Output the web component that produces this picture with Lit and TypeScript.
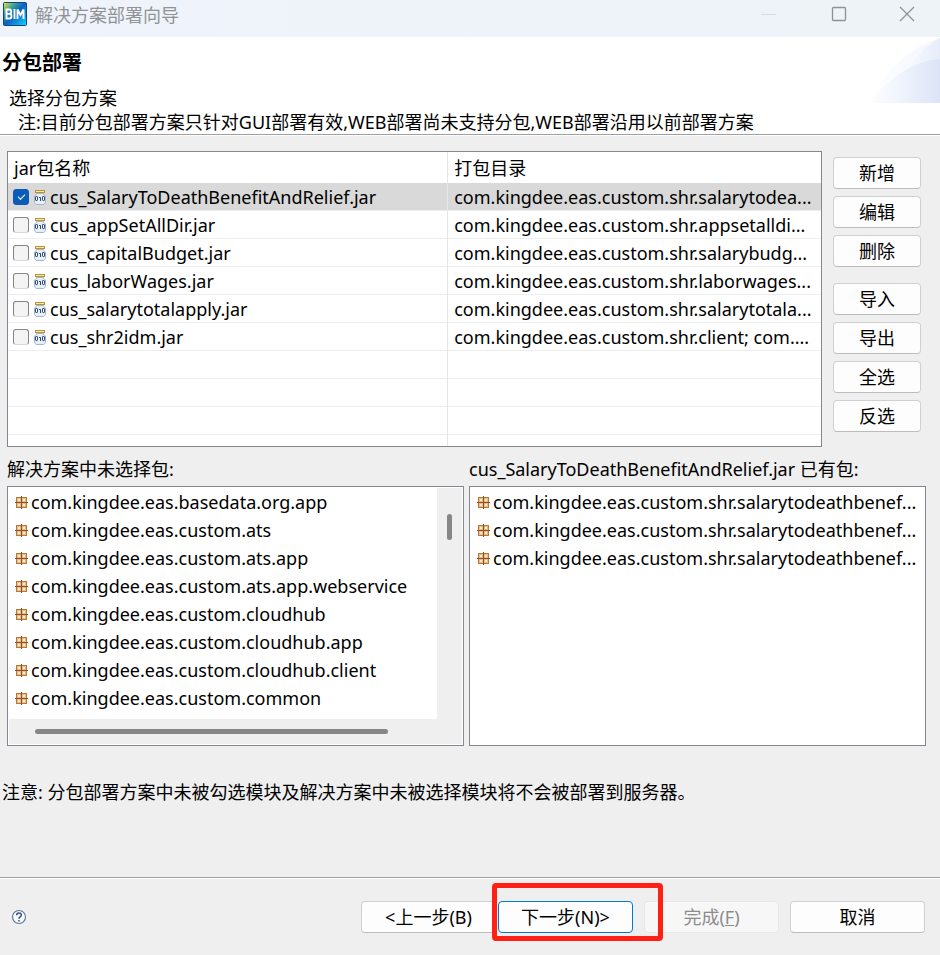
import { LitElement, html, css } from "lit";
import { customElement, state } from "lit/decorators.js";
import { classMap } from "lit/directives/class-map.js";

interface JarEntry {
  name: string;
  dirs: string;
  checked: boolean;
}

const packageIcon = html`<svg class="pkg" viewBox="0 0 13 13" aria-hidden="true">
  <rect x="1.5" y="1.5" width="10" height="10" fill="#e9bd80" stroke="#b9783a" />
  <rect x="3" y="3" width="2" height="2" fill="#fdeccb" />
  <rect x="8" y="3" width="2" height="2" fill="#fdeccb" />
  <rect x="3" y="8" width="2" height="2" fill="#fdeccb" />
  <rect x="8" y="8" width="2" height="2" fill="#fdeccb" />
  <path d="M6.500 0V13M0 6.500H13" stroke="#8a4f35" />
</svg>`;

const jarIcon = html`<svg class="jar" viewBox="0 0 12 16" aria-hidden="true">
  <rect x="1.5" y="1.5" width="9" height="2" fill="#f7e7a8" stroke="#b9952a" />
  <path d="M2.500 4.500h7v.8l2 1.700v6.500l-1.600 2H2.100l-1.600-2V7l2-1.700z" fill="#e6eef8" stroke="#a3b5cf" />
  <rect x="1.500" y="7.500" width="2" height="4" rx="0.600" fill="#fff" stroke="#2a4673" />
  <path d="M5 8.500h1.500V12" fill="none" stroke="#2a4673" />
  <rect x="8.500" y="7.500" width="2" height="4" rx="0.600" fill="#fff" stroke="#2a4673" />
</svg>`;

@customElement("package-list")
class PackageList extends LitElement {
  static properties = {
    items: { attribute: false },
    scrollable: { type: Boolean },
    label: { type: String },
  };
  declare items: string[];
  declare scrollable: boolean;
  declare label: string;

  constructor() {
    super();
    this.items = [];
    this.scrollable = false;
    this.label = "";
  }

  static styles = css`
    :host {
      display: block;
      min-width: 0;
    }
    .frame {
      box-sizing: border-box;
      min-height: 260px;
      display: grid;
      grid-template-columns: minmax(0, 1fr) auto;
      grid-template-rows: 1fr auto;
      border: 1px solid #828790;
      background: #fff;
    }
    .rows {
      margin: 0;
      padding: 1px 0 7px 7px;
      list-style: none;
    }
    .row {
      display: flex;
      align-items: center;
      gap: 3px;
      height: 28px;
      white-space: nowrap;
    }
    .pkg {
      flex: none;
      width: 13px;
      height: 13px;
    }
    .vbar {
      width: 25px;
      margin: 1px 1px 0 0;
      background: #efefef;
    }
    .hbar {
      grid-column: 1 / -1;
      height: 25px;
      margin: 0 1px 1px;
      background: #efefef;
    }
    .vthumb {
      width: 5px;
      height: 26px;
      margin: 26px 0 0 10px;
      border-radius: 3px;
      background: #868686;
    }
    .hthumb {
      width: 78%;
      height: 5px;
      margin: 10px 0 0 26px;
      border-radius: 3px;
      background: #868686;
    }
  `;

  render() {
    return html`<div class="frame">
      <ul class="rows" aria-label=${this.label}>
        ${this.items.map((item) => html`<li class="row">${packageIcon}<span>${item}</span></li>`)}
      </ul>
      ${this.scrollable
        ? html`<div class="vbar"><div class="vthumb"></div></div>
            <div class="hbar"><div class="hthumb"></div></div>`
        : null}
    </div>`;
  }
}

@customElement("app-root")
class AppRoot extends LitElement {
  @state() private jars: JarEntry[] = [
    { name: "cus_SalaryToDeathBenefitAndRelief.jar", dirs: "com.kingdee.eas.custom.shr.salarytodea...", checked: true },
    { name: "cus_appSetAllDir.jar", dirs: "com.kingdee.eas.custom.shr.appsetalldi...", checked: false },
    { name: "cus_capitalBudget.jar", dirs: "com.kingdee.eas.custom.shr.salarybudg...", checked: false },
    { name: "cus_laborWages.jar", dirs: "com.kingdee.eas.custom.shr.laborwages...", checked: false },
    { name: "cus_salarytotalapply.jar", dirs: "com.kingdee.eas.custom.shr.salarytotala...", checked: false },
    { name: "cus_shr2idm.jar", dirs: "com.kingdee.eas.custom.shr.client; com....", checked: false },
  ];
  @state() private selected = 0;

  private unselected = [
    "com.kingdee.eas.basedata.org.app",
    "com.kingdee.eas.custom.ats",
    "com.kingdee.eas.custom.ats.app",
    "com.kingdee.eas.custom.ats.app.webservice",
    "com.kingdee.eas.custom.cloudhub",
    "com.kingdee.eas.custom.cloudhub.app",
    "com.kingdee.eas.custom.cloudhub.client",
    "com.kingdee.eas.custom.common",
  ];

  private included = [
    "com.kingdee.eas.custom.shr.salarytodeathbenef...",
    "com.kingdee.eas.custom.shr.salarytodeathbenef...",
    "com.kingdee.eas.custom.shr.salarytodeathbenef...",
  ];

  static styles = css`
    :host {
      display: flex;
      flex-direction: column;
      min-height: 100vh;
      background: #efefef;
      color: #000;
      font: 18px/24px "Noto Sans", "Noto Sans CJK SC", sans-serif;
    }
    button {
      box-sizing: border-box;
      height: 32px;
      padding: 0;
      border: 1px solid #d0d0d0;
      border-bottom-color: #bcbcbc;
      border-radius: 4px;
      background: #fdfdfd;
      color: #000;
      font: inherit;
      line-height: 28px;
    }
    .titlebar {
      display: flex;
      align-items: center;
      height: 37px;
      background: linear-gradient(90deg, #eff3fb, #eef3f8);
      color: #919396;
    }
    .logo {
      width: 24px;
      height: 24px;
      margin: 0 8px 9px 3px;
    }
    .caption {
      flex: 1;
      margin-bottom: 8px;
    }
    .winbtn {
      display: grid;
      place-items: center;
      width: 71px;
      height: 28px;
      margin-bottom: 9px;
      border: 0;
      background: none;
    }
    .winbtn.last {
      width: 66px;
    }
    .glyph {
      width: 16px;
      height: 16px;
    }
    .banner {
      display: flex;
      justify-content: space-between;
      height: 97px;
      border-bottom: 1px solid #a0a0a0;
      box-shadow: 0 1px #fff;
      background: #fff;
    }
    .heading {
      margin: 0 0 12px 2px;
      padding-top: 13px;
      font: bold 20px/24px "Noto Sans CJK SC", sans-serif;
    }
    .lead {
      margin: 0 0 0 9px;
    }
    .hint {
      margin: 0 0 0 18px;
      white-space: nowrap;
    }
    .wave {
      flex: none;
      width: 72px;
      height: 66px;
    }
    .body {
      flex: 1;
      padding: 16px 14px 0 7px;
    }
    .top {
      display: flex;
      gap: 11px;
      padding-right: 5px;
    }
    .tableframe {
      flex: 1;
      min-width: 0;
      border: 1px solid #828790;
      background: #fff;
    }
    .jars {
      width: 100%;
      table-layout: fixed;
      border-collapse: separate;
      border-spacing: 0;
    }
    .namecol {
      width: 54.15%;
    }
    .jars th {
      height: 31px;
      padding: 0 6px;
      text-align: left;
      font-weight: 400;
    }
    .jars td {
      box-sizing: border-box;
      height: 28px;
      padding: 0 6px;
      border-bottom: 1px solid #ededf0;
      overflow: hidden;
      white-space: nowrap;
    }
    .jars td:first-child {
      padding: 0 5px;
    }
    .jars th:first-child,
    .jars td:first-child {
      border-right: 1px solid #e6e6ea;
    }
    .jars tr.on td {
      background: #d9d9d9;
    }
    .jars tr.rest td {
      height: 11px;
      border-bottom: 0;
    }
    .jarcell {
      display: flex;
      align-items: center;
    }
    .jar {
      flex: none;
      width: 12px;
      height: 16px;
      margin: 0 4px 0 5px;
    }
    .tick {
      box-sizing: border-box;
      flex: none;
      appearance: none;
      display: grid;
      place-items: center;
      width: 16px;
      height: 16px;
      margin: 0;
      border: 1px solid #858585;
      border-bottom-color: #d8d8d8;
      border-radius: 3px;
      background: #f4f4f4;
    }
    .tick:checked {
      border-color: #0a5cb8;
      background: #0a5cb8;
    }
    .tick:checked::after {
      content: "";
      width: 6px;
      height: 3px;
      margin-bottom: 2px;
      border: solid #fff;
      border-width: 0 0 1px 1px;
      transform: rotate(-45deg);
    }
    .side {
      display: flex;
      flex-direction: column;
      gap: 7px;
      width: 88px;
      padding-top: 6px;
    }
    .side .gap {
      margin-top: 9px;
    }
    .lists {
      display: grid;
      grid-template-columns: 1fr 1fr;
      gap: 5px;
      padding-top: 10px;
    }
    .label {
      margin: 0 0 5px;
      font: inherit;
    }
    .note {
      margin: 34px 0 0 -5px;
    }
    .footer {
      display: flex;
      align-items: center;
      justify-content: space-between;
      height: 77px;
      padding: 0 15px 0 11px;
      border-top: 1px solid #a0a0a0;
      box-shadow: inset 0 1px #fff;
    }
    .help {
      width: 16px;
      height: 16px;
      border: 0;
      background: none;
      display: grid;
      place-items: center;
    }
    .helpicon {
      width: 16px;
      height: 16px;
    }
    .actions {
      display: flex;
      gap: 11px;
    }
    .pair {
      display: flex;
      gap: 2px;
    }
    .actions button {
      width: 135px;
    }
    .actions .next {
      border-color: #0078d4;
    }
    .actions button:disabled {
      border-color: #e8e8e8;
      background: #f7f7f7;
      color: #8c8c8c;
    }
    .marked {
      position: relative;
    }
    .mark {
      position: absolute;
      z-index: 1;
      box-sizing: border-box;
      top: -18px;
      left: -6px;
      width: 171px;
      height: 58px;
      border: 5px solid #ff2015;
      border-radius: 4px;
      pointer-events: none;
    }
  `;

  private toggle(index: number) {
    this.jars = this.jars.map((jar, i) => (i === index ? { ...jar, checked: !jar.checked } : jar));
  }

  private renderTitle() {
    return html`<header class="titlebar">
      <svg class="logo" viewBox="0 0 24 24" aria-hidden="true">
        <defs>
          <linearGradient id="sky" x1="0" y1="0" x2="1" y2="1">
            <stop offset="0" stop-color="#f4e52a" />
            <stop offset="0.28" stop-color="#3b9f9c" />
            <stop offset="0.5" stop-color="#0a62c4" />
            <stop offset="1" stop-color="#16d4ff" />
          </linearGradient>
        </defs>
        <rect x="0.5" y="0.5" width="23" height="23" rx="1" fill="url(#sky)" stroke="#10457f" />
        <path
          d="M3.5 7.5v9h3q2 0 2-2.3t-2-2.3h-3h3q1.7 0 1.7-2.2t-1.7-2.2zM11.5 7v10M14.500 17V7.500l3 5.500 3-5.500V17"
          fill="none"
          stroke="#fff"
          stroke-width="1.9"
        />
      </svg>
      <span class="caption">解决方案部署向导</span>
      <button class="winbtn" aria-label="最小化">
        <svg class="glyph" viewBox="0 0 16 16"><path d="M1 8.5h15" stroke="#d8dce0" /></svg>
      </button>
      <button class="winbtn" aria-label="最大化">
        <svg class="glyph" viewBox="0 0 16 16">
          <rect x="1.5" y="1.5" width="13" height="13" rx="1" fill="none" stroke="#8f9296" stroke-width="1.3" />
        </svg>
      </button>
      <button class="winbtn last" aria-label="关闭">
        <svg class="glyph" viewBox="0 0 16 16">
          <path d="M1 1l14 14M15 1l-14 14" stroke="#8f9296" stroke-width="1.3" />
        </svg>
      </button>
    </header>`;
  }

  private renderBanner() {
    return html`<section class="banner">
      <div>
        <h1 class="heading">分包部署</h1>
        <p class="lead">选择分包方案</p>
        <p class="hint">注:目前分包部署方案只针对GUI部署有效,WEB部署尚未支持分包,WEB部署沿用以前部署方案</p>
      </div>
      <svg class="wave" viewBox="0 0 72 66" aria-hidden="true">
        <defs>
          <linearGradient id="back" x1="0" x2="1">
            <stop offset="0" stop-color="#fff" />
            <stop offset="1" stop-color="#e6ecfa" />
          </linearGradient>
          <linearGradient id="front" x1="0" x2="1">
            <stop offset="0" stop-color="#fff" />
            <stop offset="0.4" stop-color="#f2f5fd" />
            <stop offset="1" stop-color="#dbe3f6" />
          </linearGradient>
        </defs>
        <path d="M0 66Q28 14 72 1V66z" fill="url(#back)" opacity="0.5" />
        <path d="M26 66Q42 16 72 1V66z" fill="url(#back)" />
        <path d="M0 66Q34 25 72 22V66z" fill="url(#front)" />
      </svg>
    </section>`;
  }

  private renderTable() {
    return html`<div class="tableframe">
      <table class="jars">
        <colgroup>
          <col class="namecol" />
          <col />
        </colgroup>
        <thead>
          <tr>
            <th scope="col">jar包名称</th>
            <th scope="col">打包目录</th>
          </tr>
        </thead>
        <tbody>
          ${this.jars.map(
            (jar, i) => html`<tr class=${classMap({ on: i === this.selected })} @click=${() => (this.selected = i)}>
              <td>
                <div class="jarcell">
                  <input
                    class="tick"
                    type="checkbox"
                    id="jar${i}"
                    .checked=${jar.checked}
                    @change=${() => this.toggle(i)}
                  />
                  ${jarIcon}
                  <label for="jar${i}">${jar.name}</label>
                </div>
              </td>
              <td>${jar.dirs}</td>
            </tr>`
          )}
          ${[0, 1, 2].map(() => html`<tr><td></td><td></td></tr>`)}
          <tr class="rest"><td></td><td></td></tr>
        </tbody>
      </table>
    </div>`;
  }

  render() {
    return html`
      ${this.renderTitle()} ${this.renderBanner()}
      <main class="body">
        <div class="top">
          ${this.renderTable()}
          <div class="side">
            <button>新增</button>
            <button>编辑</button>
            <button>删除</button>
            <button class="gap">导入</button>
            <button>导出</button>
            <button>全选</button>
            <button>反选</button>
          </div>
        </div>
        <div class="lists">
          <section>
            <h2 class="label">解决方案中未选择包:</h2>
            <package-list label="解决方案中未选择包" scrollable .items=${this.unselected}></package-list>
          </section>
          <section>
            <h2 class="label">${this.jars[this.selected].name} 已有包:</h2>
            <package-list label="已有包" .items=${this.included}></package-list>
          </section>
        </div>
        <p class="note">注意: 分包部署方案中未被勾选模块及解决方案中未被选择模块将不会被部署到服务器。</p>
      </main>
      <footer class="footer">
        <button class="help" aria-label="帮助">
          <svg class="helpicon" viewBox="0 0 16 16">
            <circle cx="8" cy="8" r="6.5" fill="#f6f9fd" stroke="#5b7496" stroke-width="1.1" />
            <path
              d="M5.7 6.3q0-2.4 2.3-2.4t2.3 2q0 1.2-1.2 1.9T8 9.7M8 10.9v1.600"
              fill="none"
              stroke="#34517c"
              stroke-width="1.500"
            />
          </svg>
        </button>
        <div class="actions">
          <div class="pair">
            <button>&lt;上一步(B)</button>
            <div class="marked">
              <button class="next">下一步(N)&gt;</button>
              <div class="mark"></div>
            </div>
          </div>
          <button disabled>完成(<u>F</u>)</button>
          <button>取消</button>
        </div>
      </footer>
    `;
  }
}
